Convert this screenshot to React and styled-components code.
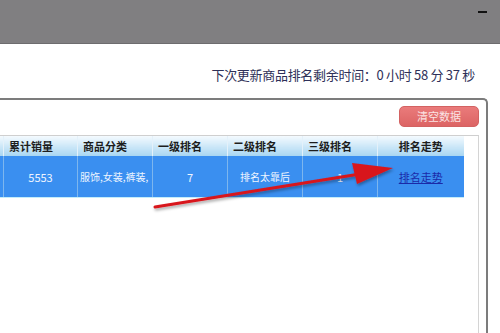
import React from "react";
import styled, { createGlobalStyle } from "styled-components";

const Global = createGlobalStyle`
  html, body { margin: 0; padding: 0; background: #fff; }
  body { width: 500px; height: 333px; overflow: hidden; font-family: "Noto Sans CJK SC", "Noto Sans", sans-serif; }
`;

const Page = styled.div`
  position: relative;
  width: 500px;
  height: 333px;
  overflow: hidden;
  display: flex;
  flex-direction: column;
`;

const TopBar = styled.div`
  height: 44px;
  flex: none;
  background: #807f81;
  border-bottom: 1px solid #6d6c6e;
  display: flex;
  justify-content: flex-end;
  align-items: flex-start;
  padding: 11px 13px 0 0;
  box-sizing: border-box;
`;

const Dash = styled.div`
  width: 9px;
  height: 2px;
  background: #111;
`;

const Info = styled.div`
  margin-top: 22px;
  padding-right: 25px;
  text-align: right;
  font-size: 13px;
  line-height: 17px;
  color: #2e3058;
  letter-spacing: -0.3px;
`;

const Panel = styled.div`
  margin: 15px 0 0 -10px;
  width: 498px;
  flex: 1;
  box-sizing: border-box;
  border: 2px solid #7c7c7c;
  border-bottom: none;
  border-radius: 0 5px 0 0;
  padding: 6px 7px 0 0;
  display: flex;
  flex-direction: column;
`;

const Toolbar = styled.div`
  display: flex;
  justify-content: flex-end;
`;

const DangerButton = styled.div`
  width: 80px;
  height: 21px;
  box-sizing: border-box;
  border: 1px solid #d36262;
  border-radius: 5px;
  background: linear-gradient(#ea7b7b, #dc6464);
  color: #fbe3e3;
  font-size: 11px;
  line-height: 19px;
  text-align: center;
`;

const GridBox = styled.div`
  margin-top: 8px;
  flex: 1;
  border-top: 1px solid #cfcfcf;
  border-right: 1px solid #d4d4d4;
`;

const Table = styled.table`
  border-collapse: collapse;
  table-layout: fixed;
  width: 471px;
`;

const Th = styled.th`
  height: 20px;
  padding: 0 0 0 ${p => (p.$center ? 0 : 5)}px;
  text-align: ${p => (p.$center ? "center" : "left")};
  font-size: 11px;
  font-weight: bold;
  color: #1d1d1d;
  background: linear-gradient(#f4fafe, #a8d6f2);
  border-left: 1px solid #e4f1fa;
  white-space: nowrap;
  overflow: hidden;
  line-height: 20px;
`;

const Td = styled.td`
  height: 41px;
  padding: 0 2px;
  text-align: ${p => p.$align || "center"};
  font-size: ${p => p.$size || 10}px;
  color: #eef5ff;
  background: #3a8ff0;
  border-left: 1px solid #7db6ee;
  border-bottom: 1px solid #c3ecfa;
  white-space: nowrap;
  overflow: hidden;
`;

const TrendLink = styled.a`
  color: #1a2aa8;
  text-decoration: underline;
  font-size: 11px;
`;

const Arrow = styled.svg`
  position: absolute;
  left: 0;
  top: 0;
  pointer-events: none;
`;

const widths = [11, 74, 75, 75, 75, 75, 86];

export default function App() {
  return (
    <Page>
      <Global />
      <TopBar>
        <Dash />
      </TopBar>
      <Info>下次更新商品排名剩余时间：0 小时 58 分 37 秒</Info>
      <Panel>
        <Toolbar>
          <DangerButton>清空数据</DangerButton>
        </Toolbar>
        <GridBox>
          <Table>
            <colgroup>
              {widths.map((w, i) => (
                <col key={i} style={{ width: w }} />
              ))}
            </colgroup>
            <thead>
              <tr>
                <Th />
                <Th>累计销量</Th>
                <Th>商品分类</Th>
                <Th>一级排名</Th>
                <Th>二级排名</Th>
                <Th>三级排名</Th>
                <Th $center>排名走势</Th>
              </tr>
            </thead>
            <tbody>
              <tr>
                <Td />
                <Td $size={11}>5553</Td>
                <Td $align="left">服饰,女装,裤装,</Td>
                <Td $size={11}>7</Td>
                <Td>排名太靠后</Td>
                <Td $size={11}>1</Td>
                <Td>
                  <TrendLink>排名走势</TrendLink>
                </Td>
              </tr>
            </tbody>
          </Table>
        </GridBox>
      </Panel>
      <Arrow width="500" height="333" viewBox="0 0 500 333">
        <defs>
          <filter id="sh" x="-10%" y="-50%" width="120%" height="200%">
            <feDropShadow dx="1" dy="2" stdDeviation="1.5" floodColor="#000" floodOpacity="0.35" />
          </filter>
        </defs>
        <g filter="url(#sh)">
          <line x1="155" y1="207" x2="360" y2="174" stroke="#d8161c" strokeWidth="3" strokeLinecap="round" />
          <polygon points="393,168 352,163 357,184" fill="#d8161c" />
        </g>
      </Arrow>
    </Page>
  );
}
